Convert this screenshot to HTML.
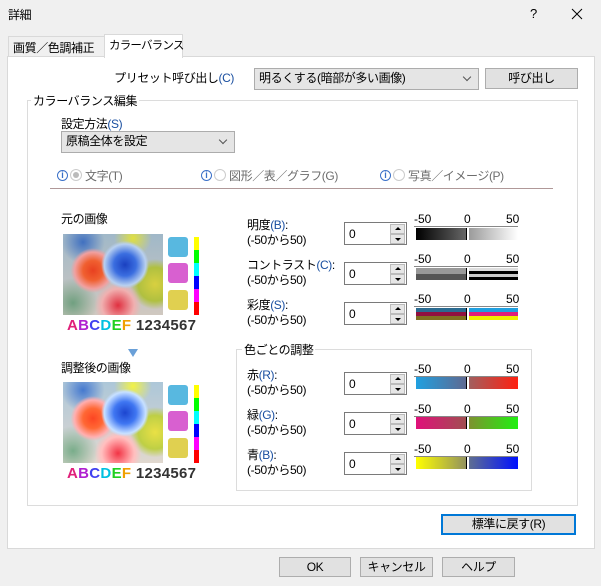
<!DOCTYPE html>
<html><head><meta charset="utf-8"><style>
*{box-sizing:border-box}
body{margin:0;width:601px;height:586px;background:#f0f0f0;font-family:"Liberation Sans","Noto Sans CJK JP",sans-serif;font-size:12px;color:#000;position:relative;overflow:hidden}
.a{position:absolute;white-space:nowrap;line-height:14px;letter-spacing:-0.4px}
.btn{position:absolute;background:#e1e1e1;border:1px solid #adadad;text-align:center;line-height:18px;letter-spacing:-0.4px}
.combo{position:absolute;background:#e5e5e5;border:1px solid #acacac;padding-left:4px;line-height:19px;letter-spacing:-0.4px}
.combo:after{content:"";position:absolute;right:8px;top:5px;width:5px;height:5px;border-right:1px solid #555;border-bottom:1px solid #555;transform:rotate(45deg)}
.spin{position:absolute;width:63px;height:23px;background:#fff;border:1px solid #7a7a7a}
.spin span{position:absolute;left:4px;top:4px;line-height:14px}
.spin i{position:absolute;right:1px;width:15px;height:10px;background:#e6e6e6;border:1px solid #bbb}
.spin i.u{top:1px}.spin i.d{top:11px}
.spin i:after{content:"";position:absolute;left:4px;border-left:3px solid transparent;border-right:3px solid transparent}
.spin i.u:after{top:2px;border-bottom:3px solid #000}
.spin i.d:after{top:3px;border-top:3px solid #000}
.sc{position:absolute;width:104px;height:10px;border-bottom:1px solid #888}
.sc b{position:absolute;font-weight:normal;top:-4px;line-height:12px}
.bar{position:absolute;width:102px;height:12px}
.bar:after{content:"";position:absolute;left:50px;top:0;width:2px;height:12px;background:#fff;border-left:1px solid #000}
.img{position:absolute;width:100px;height:81px;overflow:hidden;background:
radial-gradient(circle at 62% 38%,#1a40c0 0,#3b6ee0 14%,#b8d0f0 26%,transparent 30%),
radial-gradient(circle at 30% 45%,#e84020 0,#f06030 12%,#f0a0a0 22%,transparent 27%),
radial-gradient(circle at 55% 88%,#e03040 0,#f0b0b0 18%,transparent 26%),
radial-gradient(circle at 92% 62%,#d8d040 0,#b0c040 16%,transparent 24%),
radial-gradient(circle at 10% 85%,#70a080 0,transparent 22%),
radial-gradient(circle at 20% 10%,#4070c0 0,transparent 20%),
radial-gradient(circle at 70% 5%,#e0e040 0,transparent 18%),
linear-gradient(#a0b8c8,#d0c8c0)}
.cube{position:absolute;width:20px;height:20px;border-radius:3px}
.cb{position:absolute;width:5px}
.abc{position:absolute;font-size:15px;font-weight:bold;letter-spacing:0.3px;line-height:16px}
.abc em{font-style:normal}
.grp{position:absolute;border:1px solid #dcdcdc}
.gl{position:absolute;background:#fff;padding:0 2px;line-height:14px;letter-spacing:-0.4px}
.info{position:absolute;width:11px;height:11px;border:1px solid #3a70c8;border-radius:50%;color:#3a70c8;font-size:9px;line-height:9px;text-align:center;font-weight:bold}
.rad{position:absolute;width:12px;height:12px;border:1px solid #ccc;border-radius:50%;background:#fff}
.gray{color:#6d6d6d}
.blu{color:#1a4fa0}
</style></head><body>
<div class="a" style="left:8px;top:8px">詳細</div>
<div class="a" style="left:530px;top:7px;font-size:13px">?</div>
<svg style="position:absolute;left:571px;top:8px" width="12" height="12"><path d="M1 1L11 11M11 1L1 11" stroke="#000" stroke-width="1"/></svg>

<div class="a" style="left:8px;top:36px;width:97px;height:21px;background:#f0f0f0;border:1px solid #d9d9d9;border-bottom:none;padding:4px 0 0 4px">画質／色調補正</div>
<div style="position:absolute;left:7px;top:56px;width:588px;height:493px;background:#fff;border:1px solid #d9d9d9"></div>
<div class="a" style="left:104px;top:34px;width:79px;height:24px;background:#fff;border:1px solid #d9d9d9;border-bottom:none;padding:4px 0 0 4px;font-size:11.5px;letter-spacing:-0.8px">カラーバランス</div>

<div class="a" style="left:100px;width:134px;text-align:right;top:71px">プリセット呼び出し<span class="blu">(C)</span></div>
<div class="combo" style="left:254px;top:68px;width:225px;height:22px">明るくする(暗部が多い画像)</div>
<div class="btn" style="left:485px;top:68px;width:93px;height:21px">呼び出し</div>

<div class="grp" style="left:27px;top:100px;width:551px;height:406px"></div>
<div class="gl" style="left:31px;top:94px">カラーバランス編集</div>

<div class="a" style="left:61px;top:117px">設定方法<span class="blu">(S)</span></div>
<div class="combo" style="left:61px;top:131px;width:174px;height:22px">原稿全体を設定</div>

<div class="info" style="left:57px;top:170px">i</div><div class="rad" style="left:70px;top:169px"><div style="position:absolute;left:2px;top:2px;width:6px;height:6px;border-radius:50%;background:#bbb"></div></div><div class="a gray" style="left:85px;top:169px">文字(T)</div>
<div class="info" style="left:201px;top:170px">i</div><div class="rad" style="left:214px;top:169px"></div><div class="a gray" style="left:229px;top:169px">図形／表／グラフ(G)</div>
<div class="info" style="left:380px;top:170px">i</div><div class="rad" style="left:393px;top:169px"></div><div class="a gray" style="left:408px;top:169px">写真／イメージ(P)</div>
<div style="position:absolute;left:50px;top:188px;width:503px;height:1px;background:#b09898"></div>

<div class="a" style="left:61px;top:212px">元の画像</div>
<div class="img" style="left:63px;top:234px"></div>
<div class="cube" style="left:168px;top:237px;background:#58b8e0"></div>
<div class="cube" style="left:168px;top:263px;background:#d860d0"></div>
<div class="cube" style="left:168px;top:290px;background:#e0d050"></div>
<div class="cb" style="left:194px;top:237px;height:13px;background:#ff0"></div>
<div class="cb" style="left:194px;top:250px;height:13px;background:#0f0"></div>
<div class="cb" style="left:194px;top:263px;height:13px;background:#0ff"></div>
<div class="cb" style="left:194px;top:276px;height:13px;background:#00f"></div>
<div class="cb" style="left:194px;top:289px;height:13px;background:#f0f"></div>
<div class="cb" style="left:194px;top:302px;height:13px;background:#f00"></div>
<div class="abc" style="left:67px;top:318px"><em style="color:#e0207a">A</em><em style="color:#b020d0">B</em><em style="color:#4040f0">C</em><em style="color:#00c0e0">D</em><em style="color:#20d020">E</em><em style="color:#f0a000">F</em> <span style="color:#333">1234567</span></div>
<div style="position:absolute;left:128px;top:349px;border-left:5px solid transparent;border-right:5px solid transparent;border-top:8px solid #6aa0d8"></div>
<div class="a" style="left:61px;top:361px">調整後の画像</div>
<div class="img" style="left:63px;top:382px;filter:brightness(1.08)"></div>
<div class="cube" style="left:168px;top:385px;background:#58b8e0"></div>
<div class="cube" style="left:168px;top:411px;background:#d860d0"></div>
<div class="cube" style="left:168px;top:438px;background:#e0d050"></div>
<div class="cb" style="left:194px;top:385px;height:13px;background:#ff0"></div>
<div class="cb" style="left:194px;top:398px;height:13px;background:#0f0"></div>
<div class="cb" style="left:194px;top:411px;height:13px;background:#0ff"></div>
<div class="cb" style="left:194px;top:424px;height:13px;background:#00f"></div>
<div class="cb" style="left:194px;top:437px;height:13px;background:#f0f"></div>
<div class="cb" style="left:194px;top:450px;height:13px;background:#f00"></div>
<div class="abc" style="left:67px;top:466px"><em style="color:#e0207a">A</em><em style="color:#b020d0">B</em><em style="color:#4040f0">C</em><em style="color:#00c0e0">D</em><em style="color:#20d020">E</em><em style="color:#f0a000">F</em> <span style="color:#333">1234567</span></div>

<div class="a" style="left:247px;top:218px;line-height:15px">明度<span class="blu">(B)</span>:<br>(-50から50)</div>
<div class="spin" style="left:344px;top:222px"><span>0</span><i class="u"></i><i class="d"></i></div>
<div class="sc" style="left:414px;top:217px"><b style="left:0">-50</b><b style="left:50px">0</b><b style="left:92px">50</b></div>
<div class="bar" style="left:416px;top:228px;background:linear-gradient(90deg,#000,#666 49%,#999 51%,#fff)"></div>

<div class="a" style="left:247px;top:258px;line-height:15px">コントラスト<span class="blu">(C)</span>:<br>(-50から50)</div>
<div class="spin" style="left:344px;top:262px"><span>0</span><i class="u"></i><i class="d"></i></div>
<div class="sc" style="left:414px;top:257px"><b style="left:0">-50</b><b style="left:50px">0</b><b style="left:92px">50</b></div>
<div class="bar" style="left:416px;top:268px;background:linear-gradient(#999 0,#999 50%,#555 50%,#555 100%);"><div style="position:absolute;left:51px;top:0;width:51px;height:12px;background:linear-gradient(#ddd 0 25%,#000 25% 50%,#ccc 50% 75%,#000 75%)"></div></div>

<div class="a" style="left:247px;top:298px;line-height:15px">彩度<span class="blu">(S)</span>:<br>(-50から50)</div>
<div class="spin" style="left:344px;top:302px"><span>0</span><i class="u"></i><i class="d"></i></div>
<div class="sc" style="left:414px;top:297px"><b style="left:0">-50</b><b style="left:50px">0</b><b style="left:92px">50</b></div>
<div class="bar" style="left:416px;top:308px;background:linear-gradient(#2a6a90 0 33%,#901040 33% 66%,#807020 66%)"><div style="position:absolute;left:51px;top:0;width:51px;height:12px;background:linear-gradient(#20a0e0 0 33%,#e0207a 33% 66%,#f0f000 66%)"></div></div>

<div class="grp" style="left:236px;top:349px;width:296px;height:142px"></div>
<div class="gl" style="left:242px;top:343px">色ごとの調整</div>

<div class="a" style="left:247px;top:368px;line-height:15px">赤<span class="blu">(R)</span>:<br>(-50から50)</div>
<div class="spin" style="left:344px;top:372px"><span>0</span><i class="u"></i><i class="d"></i></div>
<div class="sc" style="left:414px;top:367px"><b style="left:0">-50</b><b style="left:50px">0</b><b style="left:92px">50</b></div>
<div class="bar" style="left:416px;top:377px;background:linear-gradient(90deg,#20a0e0,#606890 50%,#a06060 51%,#ff2010)"></div>

<div class="a" style="left:247px;top:408px;line-height:15px">緑<span class="blu">(G)</span>:<br>(-50から50)</div>
<div class="spin" style="left:344px;top:412px"><span>0</span><i class="u"></i><i class="d"></i></div>
<div class="sc" style="left:414px;top:407px"><b style="left:0">-50</b><b style="left:50px">0</b><b style="left:92px">50</b></div>
<div class="bar" style="left:416px;top:417px;background:linear-gradient(90deg,#e0107a,#a05050 50%,#809030 51%,#20f010)"></div>

<div class="a" style="left:247px;top:448px;line-height:15px">青<span class="blu">(B)</span>:<br>(-50から50)</div>
<div class="spin" style="left:344px;top:452px"><span>0</span><i class="u"></i><i class="d"></i></div>
<div class="sc" style="left:414px;top:447px"><b style="left:0">-50</b><b style="left:50px">0</b><b style="left:92px">50</b></div>
<div class="bar" style="left:416px;top:457px;background:linear-gradient(90deg,#ffff00,#909060 50%,#607090 51%,#0010ff)"></div>

<div class="btn" style="left:441px;top:514px;width:135px;height:21px;border:2px solid #0078d7;line-height:17px">標準に戻す(R)</div>

<div class="btn" style="left:279px;top:557px;width:72px;height:20px">OK</div>
<div class="btn" style="left:360px;top:557px;width:73px;height:20px">キャンセル</div>
<div class="btn" style="left:442px;top:557px;width:73px;height:20px">ヘルプ</div>
</body></html>
